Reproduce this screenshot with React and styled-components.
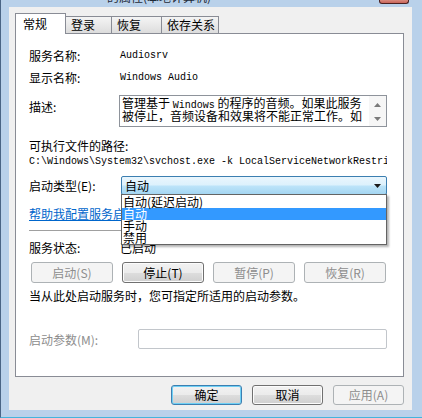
import styled, { createGlobalStyle } from "styled-components";

const GlobalStyle = createGlobalStyle`
  html, body {
    margin: 0;
    padding: 0;
    background: #b9d1ea;
  }
  body {
    font-family: "Noto Sans CJK SC", "Noto Sans", sans-serif;
    font-size: 12px;
    color: #000;
  }
`;

const tabs = [
  { label: "常规", width: 51, active: true },
  { label: "登录", width: 46 },
  { label: "恢复", width: 50 },
  { label: "依存关系", width: 57 },
];

const options = ["自动(延迟启动)", "自动", "手动", "禁用"];

const UpArrow = () => (
  <svg width="7" height="4" viewBox="0 0 7 4">
    <path d="M3.5 0 L7 4 L0 4 Z" fill="#7a7a7a" />
  </svg>
);

const DownArrow = ({ color = "#7a7a7a" }) => (
  <svg width="7" height="4" viewBox="0 0 7 4">
    <path d="M0 0 L7 0 L3.5 4 Z" fill={color} />
  </svg>
);

const App = () => {
  return (
    <Frame>
      <GlobalStyle />
      <TitleBar>
        <TitleText>的属性(本地计算机)</TitleText>
        <CloseButton />
      </TitleBar>
      <Dialog>
        <TabStrip>
          {tabs.map((t) => (
            <Tab key={t.label} $active={t.active} $w={t.width}>
              {t.label}
            </Tab>
          ))}
        </TabStrip>
        <Panel>
          <Row $mt={13}>
            <Label>服务名称:</Label>
            <Mono>Audiosrv</Mono>
          </Row>
          <Row $mt={6}>
            <Label>显示名称:</Label>
            <Mono>Windows Audio</Mono>
          </Row>
          <DescRow>
            <DescLabel>描述:</DescLabel>
            <DescBox>
              <DescText>
                <DescLine>
                  管理基于 <Mono>Windows</Mono> 的程序的音频。如果此服务
                </DescLine>
                <DescLine>被停止，音频设备和效果将不能正常工作。如</DescLine>
                <DescLine>果此服务被禁用，任何明确依赖它的服务都将</DescLine>
              </DescText>
              <ScrollBar>
                <UpArrow />
                <DownArrow />
              </ScrollBar>
            </DescBox>
          </DescRow>
          <Row $mt={10}>
            <Label $w={200}>可执行文件的路径:</Label>
          </Row>
          <Row>
            <PathText>
              C:\Windows\System32\svchost.exe -k LocalServiceNetworkRestricted
            </PathText>
          </Row>
          <Row $mt={7} $h={19}>
            <Label $w={92}>启动类型(E):</Label>
            <Combo>
              <span>自动</span>
              <ComboArrow>
                <DownArrow color="#1a1a1a" />
              </ComboArrow>
              <DropList>
                {options.map((o, i) => (
                  <Option key={o} $selected={i === 1}>
                    {o}
                  </Option>
                ))}
              </DropList>
            </Combo>
          </Row>
          <Row $mt={10}>
            <HelpLink>帮助我配置服务启动选项。</HelpLink>
          </Row>
          <Separator />
          <Row $mt={8}>
            <Label>服务状态:</Label>
            <span>已启动</span>
          </Row>
          <ButtonRow>
            <Button $w={82} disabled>启动(S)</Button>
            <Button $w={82}>停止(T)</Button>
            <Button $w={82} disabled>暂停(P)</Button>
            <Button $w={82} disabled>恢复(R)</Button>
          </ButtonRow>
          <Row $mt={4}>
            <span>当从此处启动服务时，您可指定所适用的启动参数。</span>
          </Row>
          <Row $mt={26} $h={20}>
            <Label $w={109} $muted>启动参数(M):</Label>
            <ParamInput />
          </Row>
        </Panel>
        <DialogButtons>
          <Button $w={71} $h={20} $default>确定</Button>
          <Button $w={71} $h={20}>取消</Button>
          <Button $w={71} $h={20} disabled>应用(A)</Button>
        </DialogButtons>
      </Dialog>
    </Frame>
  );
};

export default App;

const Frame = styled.div`
  width: 422px;
  height: 418px;
  box-sizing: border-box;
  padding: 0 10px 7px 8px;
  display: flex;
  flex-direction: column;
  background: #b9d1ea;
  border-left: 1px solid #4a6585;
  border-bottom: 1px solid #44b4dc;
  overflow: hidden;
`;

const TitleBar = styled.div`
  height: 7px;
  flex: none;
  display: flex;
  overflow: hidden;
`;

const TitleText = styled.div`
  margin-top: -10px;
  padding-left: 98px;
  line-height: 13px;
  height: 13px;
  font-size: 12px;
  color: #1e2a38;
  white-space: nowrap;
`;

const CloseButton = styled.div`
  margin-left: auto;
  margin-right: 3px;
  width: 30px;
  height: 4px;
  box-sizing: border-box;
  border: 1px solid #4a2020;
  border-top: none;
  border-radius: 0 0 3px 3px;
  background: linear-gradient(#d98a7d, #c9645a);
`;

const Dialog = styled.div`
  flex: 1;
  background: #f0f0f0;
  padding: 6px 8px 0 6px;
  display: flex;
  flex-direction: column;
`;

const TabStrip = styled.div`
  display: flex;
  align-items: flex-end;
  height: 20px;
  flex: none;
`;

const Tab = styled.div`
  position: relative;
  z-index: 1;
  box-sizing: border-box;
  width: ${(p) => p.$w}px;
  height: ${(p) => (p.$active ? 21 : 17)}px;
  margin-bottom: ${(p) => (p.$active ? -1 : 0)}px;
  padding: ${(p) => (p.$active ? "2px 0 0 7px" : "0 0 0 5px")};
  line-height: 16px;
  border: 1px solid #898c95;
  border-bottom: none;
  border-left-width: ${(p) => (p.$active ? 1 : 0)}px;
  background: ${(p) =>
    p.$active ? "#fff" : "linear-gradient(#f4f4f4, #e9e9e9 50%, #dcdcdc)"};
  white-space: nowrap;
`;

const Panel = styled.div`
  flex: none;
  height: 344px;
  box-sizing: border-box;
  border: 1px solid #898c95;
  background: #fff;
  padding: 0 13px;
  display: flex;
  flex-direction: column;
`;

const Row = styled.div`
  display: flex;
  align-items: center;
  flex: none;
  height: ${(p) => p.$h || 16}px;
  margin-top: ${(p) => p.$mt || 0}px;
  white-space: nowrap;
`;

const Label = styled.div`
  flex: none;
  width: ${(p) => p.$w || 91}px;
  color: ${(p) => (p.$muted ? "#8d8d8d" : "#000")};
  white-space: nowrap;
`;

const Mono = styled.span`
  font-family: "Liberation Mono", "DejaVu Sans Mono", monospace;
  font-size: 10px;
  white-space: nowrap;
`;

const PathText = styled(Mono)`
  display: block;
  width: 358px;
  overflow: hidden;
`;

const DescRow = styled.div`
  display: flex;
  margin-top: 10px;
  height: 32px;
  flex: none;
`;

const DescLabel = styled.div`
  width: 90px;
  flex: none;
  padding-top: 4px;
  line-height: 16px;
`;

const DescBox = styled.div`
  width: 268px;
  height: 32px;
  box-sizing: border-box;
  border: 1px solid #8e939b;
  display: flex;
  overflow: hidden;
`;

const DescText = styled.div`
  flex: 1;
  height: 27px;
  padding-left: 2px;
  overflow: hidden;
`;

const DescLine = styled.div`
  height: 13px;
  line-height: 13px;
  white-space: nowrap;
  overflow: hidden;
`;

const ScrollBar = styled.div`
  width: 17px;
  flex: none;
  background: #f6f6f6;
  display: flex;
  flex-direction: column;
  align-items: center;
  justify-content: space-between;
  padding: 7px 0 5px;
  box-sizing: border-box;
`;

const Combo = styled.div`
  position: relative;
  width: 266px;
  height: 19px;
  box-sizing: border-box;
  border: 1px solid #3c7fb1;
  border-radius: 2px;
  background: linear-gradient(#eaf6fd 0%, #dcf1fc 48%, #bde4f9 52%, #a4d6f2 100%);
  display: flex;
  align-items: center;
  padding-left: 3px;
  line-height: 16px;
`;

const ComboArrow = styled.span`
  margin-left: auto;
  margin-right: 5px;
  display: flex;
`;

const DropList = styled.div`
  position: absolute;
  top: 17px;
  left: -1px;
  width: 266px;
  box-sizing: border-box;
  border: 1px solid #646464;
  padding-top: 1px;
  background: #fff;
  box-shadow: 2px 2px 2px rgba(0, 0, 0, 0.3);
  z-index: 5;
`;

const Option = styled.div`
  height: 12px;
  line-height: 12px;
  padding-left: 1px;
  background: ${(p) => (p.$selected ? "#3399ff" : "transparent")};
  color: ${(p) => (p.$selected ? "#fff" : "#000")};
`;

const HelpLink = styled.span`
  color: #0066cc;
  text-decoration: underline;
`;

const Separator = styled.div`
  flex: none;
  height: 1px;
  width: 357px;
  margin-top: 9px;
  background: #a0a0a0;
`;

const ButtonRow = styled.div`
  display: flex;
  gap: 9px;
  margin-top: 7px;
  padding-left: 2px;
  flex: none;
`;

const Button = styled.button`
  width: ${(p) => p.$w}px;
  height: ${(p) => p.$h || 21}px;
  box-sizing: border-box;
  padding: 0;
  font-family: inherit;
  font-size: 12px;
  line-height: 14px;
  border-radius: 3px;
  border: 1px solid ${(p) => (p.$default ? "#3c7fb1" : "#707070")};
  background: linear-gradient(#f2f2f2 0%, #ebebeb 50%, #dddddd 51%, #cfcfcf 100%);
  box-shadow: inset 0 0 0 1px ${(p) => (p.$default ? "#6fd0f5" : "#fcfcfc")};
  color: #000;

  &:disabled {
    border-color: #adb2b5;
    background: #f4f4f4;
    box-shadow: none;
    color: #8d8d8d;
  }
`;

const ParamInput = styled.div`
  width: 249px;
  height: 20px;
  box-sizing: border-box;
  border: 1px solid #c2c6cb;
  border-radius: 2px;
  background: #fff;
`;

const DialogButtons = styled.div`
  display: flex;
  justify-content: flex-end;
  gap: 10px;
  margin-top: 8px;
`;
